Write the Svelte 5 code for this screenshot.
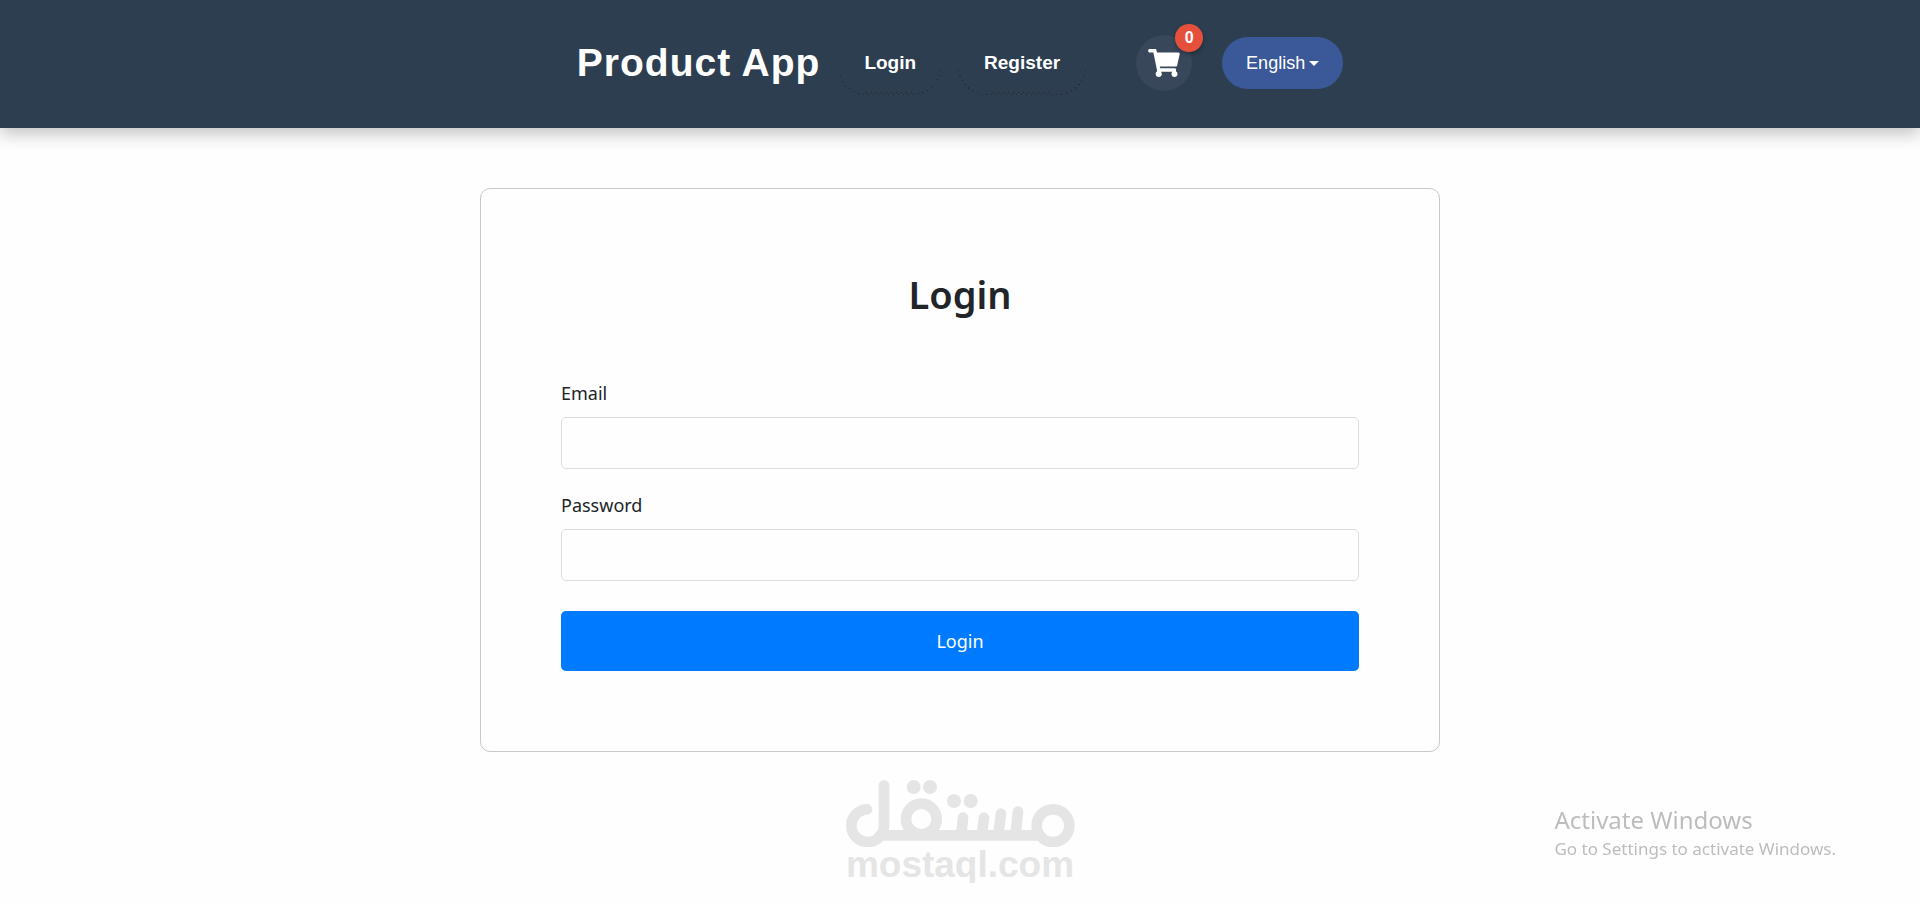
<!-- src/App.svelte -->
<script>
    let email = $state('');
    let password = $state('');
    let cartCount = $state(0);

    const links = [
        { label: 'Login', href: '#login' },
        { label: 'Register', href: '#register' },
    ];

    function handleSubmit(event) {
        event.preventDefault();
    }
</script>

<header class="navbar">
    <a class="brand" href="#home">Product App</a>

    <nav class="links">
        {#each links as link}
            <a class="nav-link" href={link.href}>
                {link.label}
                <svg class="edge" aria-hidden="true">
                    <rect x="0.5" y="-36.5" width="100%" height="62" rx="28" />
                    <line x1="27%" y1="23.5" x2="73%" y2="23.5" />
                </svg>
            </a>
        {/each}
    </nav>

    <a class="cart" href="#cart" aria-label="Cart">
        <svg viewBox="0 0 576 512" aria-hidden="true">
            <path d="M528.12 301.319l47.273-208C578.806 78.301 567.391 64 551.99 64H159.208l-9.166-44.81C147.758 8.021 137.93 0 126.529 0H24C10.745 0 0 10.745 0 24v16c0 13.255 10.745 24 24 24h69.883l70.248 343.435C147.325 417.1 136 435.222 136 456c0 30.928 25.072 56 56 56s56-25.072 56-56c0-15.674-6.447-29.835-16.824-40h209.647C430.447 426.165 424 440.326 424 456c0 30.928 25.072 56 56 56s56-25.072 56-56c0-22.172-12.888-41.332-31.579-50.405l5.517-24.276c3.413-15.018-8.002-29.319-23.403-29.319H218.117l-6.545-32h293.145c11.206 0 20.92-7.754 23.403-18.681z" />
        </svg>
        <span class="badge">{cartCount}</span>
    </a>

    <button class="language" type="button" aria-haspopup="menu">
        English
        <span class="caret"></span>
    </button>
</header>

<main>
    <form class="card" onsubmit={handleSubmit}>
        <h1>Login</h1>

        <div class="field">
            <label for="email">Email</label>
            <input id="email" type="email" bind:value={email} />
        </div>
        <div class="field">
            <label for="password">Password</label>
            <input id="password" type="password" bind:value={password} />
        </div>

        <button class="submit" type="submit">Login</button>
    </form>
</main>

<footer class="credit">
    <svg viewBox="75 60 690 202" role="img" aria-label="مستقل">
        <g class="stroke">
            <path d="M192 76V197A49 49 0 1 1 141 148" />
            <path d="M180 226H655" />
            <circle cx="304" cy="177" r="46" />
            <circle cx="699" cy="197" r="49" />
            <path d="M429 173L424 222M492 173L486 222M543 161L535 222M594 155L587 222" />
        </g>
        <circle cx="281" cy="81" r="21" />
        <circle cx="330" cy="81" r="21" />
        <circle cx="402" cy="123" r="21" />
        <circle cx="452" cy="123" r="21" />
    </svg>
    <span>mostaql.com</span>
</footer>

<aside class="activation">
    <strong>Activate Windows</strong>
    <span>Go to Settings to activate Windows.</span>
</aside>

<style>
    :global(body) {
        background: #fefefe;
        color: #212529;
        font-family: 'Noto Sans', 'Open Sans', sans-serif;
        font-size: 18px;
    }

    /* Top bar */
    .navbar {
        display: flex;
        justify-content: center;
        align-items: center;
        padding: 35px 24px 37px;
        background: #2c3e50;
        box-shadow: 0 6px 16px rgba(0, 0, 0, 0.24);
        font-family: 'Liberation Sans', Arial, sans-serif;
    }
    .brand {
        margin-right: 18px;
        color: #fff;
        font-size: 39px;
        font-weight: bold;
        letter-spacing: 1px;
        text-decoration: none;
    }
    .links {
        display: flex;
        gap: 16px;
        margin-right: 50px;
    }
    .nav-link {
        position: relative;
        padding: 12px 26px;
        color: #fff;
        font-size: 19px;
        font-weight: bold;
        line-height: 20px;
        text-decoration: none;
    }
    /* dotted lower rim of the pill */
    .edge {
        position: absolute;
        top: 28px;
        left: 0;
        width: 100%;
        height: 28px;
        fill: none;
        stroke: #2a2426;
        stroke-width: 1;
        stroke-dasharray: 1 4;
        shape-rendering: crispEdges;
    }
    .edge rect {
        width: calc(100% - 1px);
    }
    .cart {
        position: relative;
        display: flex;
        justify-content: center;
        align-items: center;
        width: 56px;
        height: 56px;
        margin-right: 30px;
        border-radius: 50%;
        background: #38485a;
    }
    .cart svg {
        width: 32px;
        height: 28px;
        fill: #fff;
    }
    .badge {
        position: absolute;
        top: -11px;
        right: -11px;
        width: 28px;
        border-radius: 50%;
        background: #e5503c;
        box-shadow: 0 2px 4px rgba(0, 0, 0, 0.3);
        color: #fff;
        font-size: 16px;
        font-weight: bold;
        line-height: 28px;
        text-align: center;
    }
    .language {
        display: flex;
        align-items: center;
        gap: 4px;
        height: 52px;
        padding: 0 24px;
        border: 0;
        border-radius: 26px;
        background: #3b5998;
        color: #fff;
        font-family: inherit;
        font-size: 18px;
    }
    .caret {
        border: 5px solid transparent;
        border-top-color: #fff;
        border-bottom: 0;
    }

    /* Login form */
    .card {
        box-sizing: border-box;
        width: 50%;
        margin: 60px auto 28px;
        padding: 80px;
        border: 1px solid #c8c8c8;
        border-radius: 10px;
    }
    h1 {
        margin: 0 0 58px;
        font-size: 38px;
        font-weight: 600;
        line-height: 50px;
        text-align: center;
    }
    .field {
        display: flex;
        flex-direction: column;
        gap: 8px;
        margin-bottom: 20px;
    }
    label {
        line-height: 32px;
    }
    input {
        box-sizing: border-box;
        height: 52px;
        padding: 0 16px;
        border: 1px solid #dadcde;
        border-radius: 5px;
        background: transparent;
        font: inherit;
    }
    .submit {
        width: 100%;
        height: 60px;
        margin-top: 10px;
        border: 0;
        border-radius: 5px;
        background: #007bff;
        color: #fff;
        font: inherit;
    }

    .credit {
        display: flex;
        flex-direction: column;
        align-items: center;
        color: #e5e5e5;
        font-family: 'Liberation Sans', Arial, sans-serif;
        font-size: 37px;
        font-weight: bold;
        line-height: 36px;
    }
    .credit svg {
        width: 230px;
        fill: currentColor;
    }
    .stroke {
        fill: none;
        stroke: currentColor;
        stroke-width: 32;
        stroke-linecap: round;
    }

    /* System notice, floats over the page */
    .activation {
        position: fixed;
        right: 84px;
        bottom: 42px;
        display: flex;
        flex-direction: column;
        color: #bdbdbd;
        font-size: 17px;
        line-height: 26px;
    }
    .activation strong {
        font-size: 24px;
        font-weight: normal;
        line-height: 32px;
    }
</style>
